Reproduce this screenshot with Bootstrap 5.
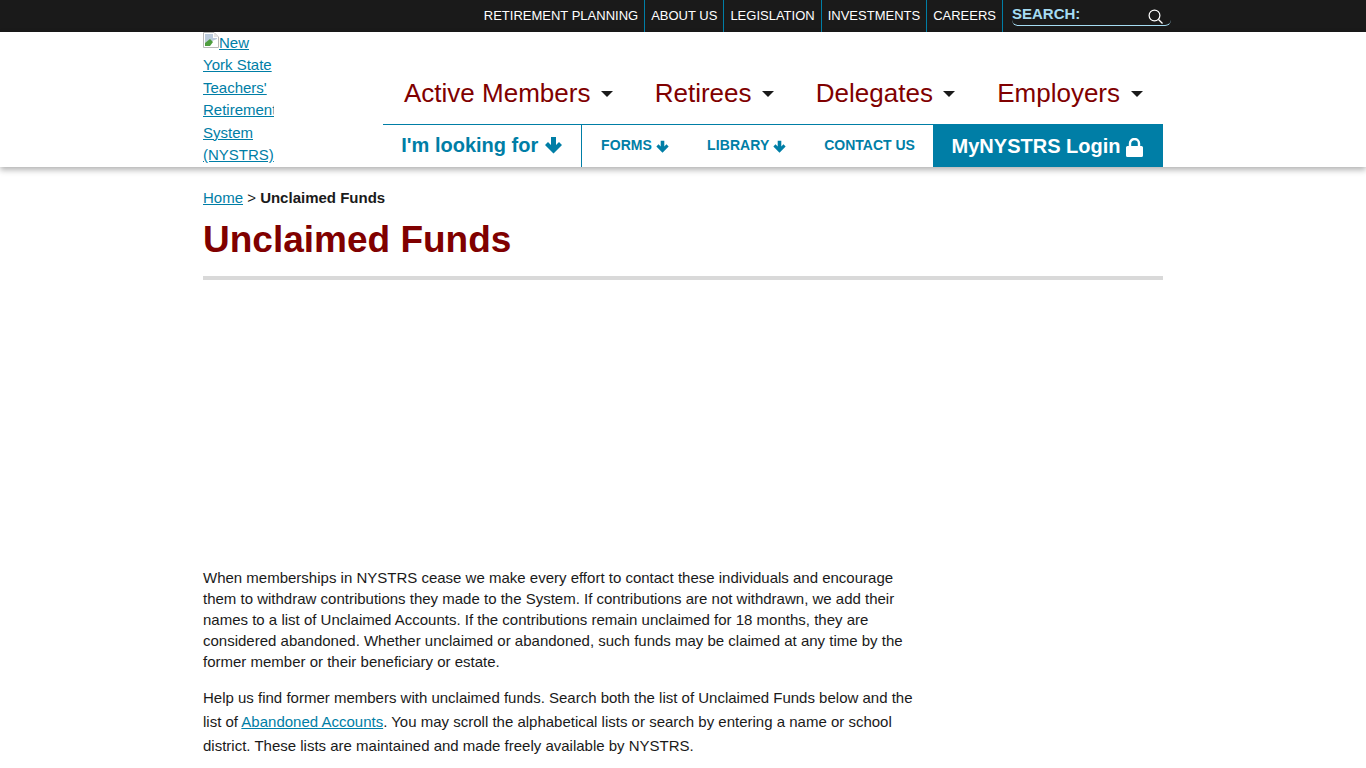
<!DOCTYPE html>
<html lang="en">
<head>
  <meta charset="UTF-8">
  <title>Unclaimed Funds - NYSTRS</title>
  <meta name="viewport" content="width=device-width, initial-scale=1.0">
  <link href="https://cdn.jsdelivr.net/npm/bootstrap@5.3.0/dist/css/bootstrap.min.css" rel="stylesheet">
  <style>
    html, body { height: 100%; }
    body { font-family: "Liberation Sans", Arial, sans-serif; font-size: 15px; line-height: 21px; color: #1a1a1a; overflow: hidden; }
    a { color: #007ea6; }
    .wrap { width: 960px; margin: 0 auto; }
    .topbar { background: #1a1a1a; height: 32px; }
    .topbar .wrap { height: 32px; }
    .toplink { color: #fff; text-decoration: none; font-size: 13px; line-height: 31px; padding: 0 6px; border-right: 1px solid #007ea6; height: 32px; white-space: nowrap; }
    .searchbox { flex: 0 0 159px; height: 26px; margin: 0 -8px 0 9px; border-bottom: 1px solid #a5dcf2; border-radius: 0 0 6px 6px; color: #a5dcf2; font-size: 15px; font-weight: 700; line-height: 27px; }
    .search-icon { margin: 9px 8px 0 0; }
    .site-head { height: 135px; background: #fff; box-shadow: 0 3px 6px rgba(0,0,0,.3); position: relative; }
    .logo-box { flex: 0 0 180px; }
    .logo-link { display: block; width: 71px; height: 135px; overflow: hidden; font-size: 15px; line-height: 22.4px; }
    .broken-img { vertical-align: 0; }
    .head-nav { flex: 0 0 780px; }
    .main-nav { height: 92px; padding-top: 45px; }
    .main-link { color: #800000; text-decoration: none; font-size: 26px; line-height: 33px; padding: 0 20.800px 0 21px; white-space: nowrap; }
    .caret-mark { display: inline-block; width: 0; height: 0; margin-left: 10.5px; border-left: 6px solid transparent; border-right: 6px solid transparent; border-top: 6px solid #1a1a1a; vertical-align: 5px; }
    .sub-nav { height: 43px; border-top: 1px solid #007ea6; }
    .sub-link { color: #007ea6; text-decoration: none; font-weight: 700; font-size: 14px; line-height: 40px; letter-spacing: .1px; padding: 0 19px; white-space: nowrap; }
    .look-link { font-size: 20px; flex: 0 0 199px; padding: 0; border-right: 1px solid #007ea6; text-align: center; letter-spacing: 0; }
    .look-arrow { vertical-align: -2px; }
    .contact-link { padding-right: 18px; letter-spacing: 0; }
    .login-link { background: #007ea6; color: #fff; font-size: 20px; flex: 0 0 230px; padding: 0 2px 0 0; text-align: center; height: 43px; margin-top: -1px; margin-left: auto; line-height: 44px; letter-spacing: 0; }
    .crumbs { padding-top: 20px; font-size: 15px; line-height: 22px; }
    .page-title { color: #800000; font-weight: 700; font-size: 37px; line-height: 44px; margin: 9px 0 14px; }
    .title-rule { height: 4px; background: #d9d9d9; }
    .video-gap { height: 287px; }
    .body-text { width: 712px; }
    .body-text p { margin-bottom: 14px; }
    .body-text .tall-lines { line-height: 24px; }
  </style>
</head>
<body>
  <div class="topbar">
    <div class="wrap d-flex justify-content-end align-items-start">
      <a class="toplink" href="#">RETIREMENT PLANNING</a>
      <a class="toplink" href="#">ABOUT US</a>
      <a class="toplink" href="#">LEGISLATION</a>
      <a class="toplink" href="#">INVESTMENTS</a>
      <a class="toplink" href="#">CAREERS</a>
      <div class="searchbox d-flex justify-content-between">
        <span>SEARCH:</span>
        <svg class="search-icon" width="15" height="15" viewBox="0 0 15 15" fill="none" stroke="#fff" stroke-width="1.2"><circle cx="6.500" cy="6.500" r="5.400"/><path d="M10.500 10.500l4 4"/></svg>
      </div>
    </div>
  </div>

  <header class="site-head">
    <div class="wrap d-flex">
      <div class="logo-box">
        <a class="logo-link" href="#"><svg class="broken-img" width="16" height="16" viewBox="0 0 16 16"><path d="M.5.5h10.500l4.500 4.500v10.500H.500z" fill="#fff" stroke="#b8b8b8"/><path d="M2 2h8v4h4v1L2 12z" fill="#bccbdc"/><path d="M2 14v-3l5-4 3 3-3 4z" fill="#4f9d3f"/><path d="M11 1v4h4z" fill="#e6e6e6"/></svg>New York State Teachers' Retirement System (NYSTRS)</a>
      </div>
      <div class="head-nav">
        <nav class="main-nav d-flex">
          <a class="main-link" href="#">Active Members<span class="caret-mark"></span></a>
          <a class="main-link" href="#">Retirees<span class="caret-mark"></span></a>
          <a class="main-link" href="#">Delegates<span class="caret-mark"></span></a>
          <a class="main-link" href="#">Employers<span class="caret-mark"></span></a>
        </nav>
        <div class="sub-nav d-flex">
          <a class="sub-link look-link" href="#">I'm looking for <svg class="look-arrow" width="19" height="18" viewBox="0 0 18 18" fill="#007ea6"><path d="M6.500 1h5v8l3-3 3 3L9 17.500.5 9l3-3 3 3z"/></svg></a>
          <a class="sub-link" href="#">FORMS <svg width="13" height="13" viewBox="0 0 18 18" fill="#007ea6"><path d="M6.500 1h5v8l3-3 3 3L9 17.500.5 9l3-3 3 3z"/></svg></a>
          <a class="sub-link" href="#">LIBRARY <svg width="13" height="13" viewBox="0 0 18 18" fill="#007ea6"><path d="M6.500 1h5v8l3-3 3 3L9 17.500.5 9l3-3 3 3z"/></svg></a>
          <a class="sub-link contact-link" href="#">CONTACT US</a>
          <a class="sub-link login-link" href="#">MyNYSTRS Login <svg width="17" height="19" viewBox="0 0 17 19" fill="#fff"><path d="M1.500 8h14a1.500 1.500 0 0 1 1.500 1.500v8a1.500 1.500 0 0 1-1.500 1.500h-14A1.500 1.500 0 0 1 0 17.500v-8A1.500 1.500 0 0 1 1.500 8z"/><path d="M4 9V5.500a4.500 4.500 0 0 1 9 0V9" fill="none" stroke="#fff" stroke-width="2.400"/></svg></a>
        </div>
      </div>
    </div>
  </header>

  <main class="wrap">
    <div class="crumbs"><a href="#">Home</a> &gt; <strong>Unclaimed Funds</strong></div>
    <h1 class="page-title">Unclaimed Funds</h1>
    <div class="title-rule"></div>
    <div class="video-gap"></div>
    <div class="body-text">
      <p>When memberships in NYSTRS cease we make every effort to contact these individuals and encourage them to withdraw contributions they made to the System. If contributions are not withdrawn, we add their names to a list of Unclaimed Accounts. If the contributions remain unclaimed for 18 months, they are considered abandoned. Whether unclaimed or abandoned, such funds may be claimed at any time by the former member or their beneficiary or estate.</p>
      <p class="tall-lines">Help us find former members with unclaimed funds. Search both the list of Unclaimed Funds below and the list of <a href="#">Abandoned Accounts</a>. You may scroll the alphabetical lists or search by entering a name or school district. These lists are maintained and made freely available by NYSTRS.</p>
    </div>
  </main>
  <script src="https://cdn.jsdelivr.net/npm/bootstrap@5.3.0/dist/js/bootstrap.bundle.min.js"></script>
</body>
</html>
